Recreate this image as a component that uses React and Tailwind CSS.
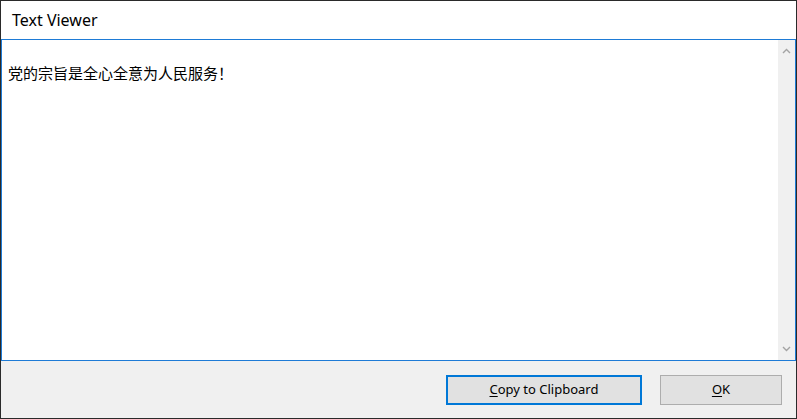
export default function App() {
  const font = { fontFamily: '"Segoe UI", "Noto Sans", "Noto Sans CJK SC", sans-serif' };
  return (
    <div className="w-[797px] h-[419px] border border-[#2a2a2a] bg-[#f0f0f0] flex flex-col overflow-hidden" style={font}>
      <div className="h-[38px] bg-white flex items-center pl-[11px] text-[16px] text-black shrink-0">Text Viewer</div>
      <div className="h-[322px] shrink-0 border border-[#1e7bd6] bg-white flex">
        <div className="flex-1 pl-[6px] pt-[22px] text-[15px] text-black" style={{ fontFamily: '"Noto Sans CJK SC", sans-serif' }}>
          党的宗旨是全心全意为人民服务！
        </div>
        <div className="w-[17px] bg-[#f0f0f0] flex flex-col justify-between items-center py-[8px]">
          <svg width="9" height="6" viewBox="0 0 9 6"><path d="M1 5 L4.5 1.5 L8 5" fill="none" stroke="#a3a3a3" strokeWidth="1.4" /></svg>
          <svg width="9" height="6" viewBox="0 0 9 6"><path d="M1 1 L4.5 4.5 L8 1" fill="none" stroke="#a3a3a3" strokeWidth="1.4" /></svg>
        </div>
      </div>
      <div className="flex-1 flex justify-end items-start pt-[14px] pr-[14px] gap-[18px]">
        <button className="w-[196px] h-[30px] border-2 border-[#0078d7] bg-[#e1e1e1] text-[13px] text-black">
          <span className="underline underline-offset-2">C</span>opy to Clipboard
        </button>
        <button className="w-[122px] h-[30px] border border-[#adadad] bg-[#e1e1e1] text-[13px] text-black">
          <span className="underline underline-offset-2">O</span>K
        </button>
      </div>
    </div>
  );
}
